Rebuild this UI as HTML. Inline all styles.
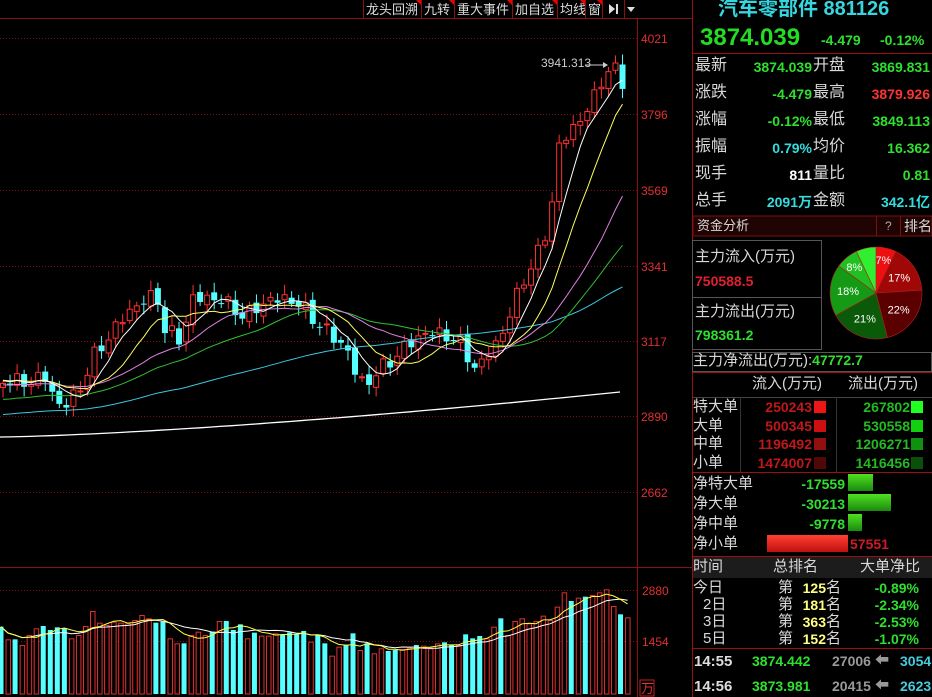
<!DOCTYPE html>
<html><head><meta charset="utf-8"><style>
html,body{margin:0;padding:0;background:#000;width:932px;height:697px;overflow:hidden}
body{position:relative;font-family:"Liberation Sans","Noto Sans CJK SC",sans-serif;color:#ccc}
.t{position:absolute;white-space:nowrap;line-height:1}
.r{text-align:right}
.g{color:#2ee02e}.rd{color:#ff3333}.c{color:#33dddd}.w{color:#fff}.y{color:#ffff80}.dr{color:#cc1a1a}
.lbl{color:#d8d8d8;font-size:15px}
.num{font-size:14px;font-weight:bold}
</style></head><body>
<svg id="ch" width="932" height="697" style="position:absolute;left:0;top:0"></svg>

<div class="t c" style="left:718px;top:-1px;font-size:20px;font-weight:bold;color:#35d6e0">汽车零部件 881126</div>
<div class="t g" style="left:700px;top:26px;font-size:24px;font-weight:bold;color:#22dd22">3874.039</div>
<div class="t g num" style="left:821px;top:33px">-4.479</div>
<div class="t g num" style="left:880px;top:33px">-0.12%</div>

<div id="rows"></div>

<div class="t lbl" style="left:697px;top:219px;font-size:13px">资金分析</div>
<div class="t" style="left:885px;top:220px;font-size:12px;color:#aaa">?</div>
<div class="t lbl" style="left:904px;top:219px;font-size:14px">排名</div>

<div class="t lbl" style="left:695px;top:249px">主力流入(万元)</div>
<div class="t num dr" style="left:695px;top:274px;color:#e02030">750588.5</div>
<div class="t lbl" style="left:695px;top:304px">主力流出(万元)</div>
<div class="t num g" style="left:695px;top:328px">798361.2</div>
<div class="t lbl" style="left:693px;top:353px">主力净流出(万元):<span class="num g">47772.7</span></div>

<div class="t lbl" style="left:752px;top:376px">流入(万元)</div>
<div class="t lbl" style="left:848px;top:376px">流出(万元)</div>
<div id="tbl"></div>

<div class="t lbl" style="left:693px;top:559px">时间</div>
<div class="t lbl" style="left:773px;top:559px">总排名</div>
<div class="t lbl" style="left:860px;top:559px">大单净比</div>
<div id="rank"></div>

<div class="t num" style="left:694px;top:654px;color:#ddd;font-size:15px">14:55</div>
<div class="t num g" style="left:752px;top:654px">3874.442</div>
<div class="t num" style="left:832px;top:654px;color:#999">27006</div>
<div class="t num" style="left:875px;top:653px;color:#999">&#x2B05;</div>
<div class="t num c" style="left:900px;top:654px;color:#44ccdd">3054</div>
<div class="t num" style="left:694px;top:679px;color:#ddd;font-size:15px">14:56</div>
<div class="t num g" style="left:752px;top:679px">3873.981</div>
<div class="t num" style="left:832px;top:679px;color:#999">20415</div>
<div class="t num" style="left:875px;top:678px;color:#999">&#x2B05;</div>
<div class="t num c" style="left:900px;top:679px;color:#44ccdd">2623</div>

<script>
(function(){
var S=document.getElementById('ch'),h='';
function L(x1,y1,x2,y2,c,w,d){h+='<line x1="'+x1+'" y1="'+y1+'" x2="'+x2+'" y2="'+y2+'" stroke="'+c+'" stroke-width="'+(w||1)+'"'+(d?' stroke-dasharray="'+d+'"':'')+'/>';}
function R(x,y,w,hh,f,s){h+='<rect x="'+x+'" y="'+y+'" width="'+w+'" height="'+hh+'" fill="'+f+'"'+(s?' stroke="'+s+'" stroke-width="1"':'')+'/>';}
function T(x,y,t,c,fs,a,fw){h+='<text x="'+x+'" y="'+y+'" fill="'+c+'" font-size="'+fs+'" font-family="Liberation Sans,Noto Sans CJK SC,sans-serif"'+(a?' text-anchor="'+a+'"':'')+(fw?' font-weight="bold"':'')+'>'+t+'</text>';}
var RED='#8b1010';
[38,114,190,266,341,416,492].forEach(function(y,i){L(0,y+.5,637,y+.5,'#7a1010',1,'1,2');T(641,y+5,['4021','3796','3569','3341','3117','2890','2662'][i],'#e03030',12);});
[590,641].forEach(function(y,i){L(0,y+.5,637,y+.5,'#7a1010',1,'1,2');T(642,y+5,['2880','1454'][i],'#e03030',12);});
L(0,567.5,692,567.5,RED,1);
L(637.5,18,637.5,697,RED,1);
L(0,18.5,692,18.5,RED,1);
L(692.5,0,692.5,697,'#9a1010',1);
var tb=[['龙头回溯',363,58],['九转',421,33],['重大事件',454,58],['加自选',512,45],['均线',557,28],['窗',585,17]];
tb.forEach(function(b){L(b[1]+.5,0,b[1]+.5,18,RED);T(b[1]+3,14,b[0],'#ddd',13);h+='<polygon points="'+(b[1]+b[2]-5)+',0 '+(b[1]+b[2])+',0 '+(b[1]+b[2])+',5" fill="#e00"/>';});
L(602.5,0,602.5,18,RED);L(624.5,0,624.5,18,RED);
h+='<polygon points="609,4 615,9 609,14" fill="#ddd"/>';L(617,4,617,14,'#ddd',2);
h+='<polygon points="627,7 635,7 631,12" fill="#ddd"/>';
var kp=[[0,380],[20,383],[45,378],[62,410],[70,400],[80,388],[95,355],[110,335],[130,310],[150,297],[158,300],[165,330],[180,340],[192,300],[210,297],[230,305],[245,318],[262,303],[285,298],[300,305],[315,320],[330,335],[345,345],[355,372],[365,385],[380,370],[400,352],[420,335],[440,333],[460,343],[478,372],[490,350],[505,330],[520,285],[535,262],[550,220],[558,150],[570,130],[585,115],[595,95],[605,72],[615,70],[622,82]];
function interp(x){for(var k=1;k<kp.length;k++){if(x<=kp[k][0]){var a=kp[k-1],b=kp[k];return a[1]+(b[1]-a[1])*(x-a[0])/(b[0]-a[0]);}}return kp[kp.length-1][1];}
var N=89,cl=[],i,x;
for(i=0;i<N;i++){x=i*7.04+3;cl.push(interp(x)+Math.sin(i*2.3)*6+Math.cos(i*1.7)*3);}
for(i=0;i<N;i++){x=i*7.04+3;var op=i?cl[i-1]+Math.sin(i*3.1)*3:cl[0]+4,c=cl[i];var bt=Math.min(op,c),bb=Math.max(op,c);if(bb-bt<1)bb=bt+1;
 var hi=bt-3-Math.abs(Math.sin(i*5.3))*7,lo=bb+3+Math.abs(Math.cos(i*4.1))*7;
 if(c<op){L(x,hi,x,bt,'#ff3030');L(x,bb,x,lo,'#ff3030');R(x-2.5,bt,5,bb-bt,'#000','#ff3030');}
 else{L(x,hi,x,lo,'#55ffff');R(x-3,bt,6,bb-bt,'#55ffff');}
}
function ma(n,col,base){var p='';for(var i=0;i<N;i++){var s=0;for(var j=i-n+1;j<=i;j++){s+=(j<0?base:cl[j]);}var v=s/n;p+=(i?'L':'M')+(i*7.04+3).toFixed(1)+','+v.toFixed(1);}h+='<path d="'+p+'" fill="none" stroke="'+col+'" stroke-width="1"/>';}
ma(60,'#3cc8e0',415);ma(30,'#30c030',400);ma(20,'#e080e0',385);ma(10,'#ffff60',380);ma(5,'#ffffff',380);
var p='';for(x=0;x<=620;x+=10){p+=(x?'L':'M')+x+','+(437-45*Math.pow(x/620,1.4)).toFixed(1);}h+='<path d="'+p+'" fill="none" stroke="#fff" stroke-width="1.3"/>';
T(541,67,'3941.313','#ccc',12);L(585,65,603,65,'#ccc');h+='<polygon points="603,62 608,65 603,68" fill="#ccc"/>';
var vd='c215 r253 c253 r270 r240 r220 c213 c225 c217 c220 r250 r240 r213 r168 r203 r210 r200 r203 r205 r195 r180 r190 c203 c200 r250 r265 c265 r240 r230 r240 c230 r198 c198 c225 c208 r250 c233 r242 r242 r235 c240 c232 c238 c228 r260 c240 c265 r302 r275 c270 c235 r285 c265 r295 r280 c288 c285 r282 r278 c270 r272 r280 r265 c262 c270 r270 c238 c250 c243 r250 r215 c190 r240 r198 r190 r205 r198 r182 r195 r155 r112 c138 r128 c125 r120 r112 r103 r153 c178 r187'.split(' ');
var vt=[];vd.forEach(function(s,i){var x=i*7.04+1,y=555+(+s.slice(1))/3;vt.push(y);if(s[0]=='c')R(x-2.5,y,5,694-y,'#55ffff');else R(x-2,y+.5,4.5,693.5-y,'#000','#e03030');});
function vma(n,col){var p='';for(var i=0;i<vt.length;i++){var s=0,k=0;for(var j=Math.max(0,i-n+1);j<=i;j++){s+=vt[j];k++;}p+=(i?'L':'M')+(i*7.04+1).toFixed(1)+','+(s/k).toFixed(1);}h+='<path d="'+p+'" fill="none" stroke="'+col+'"/>';}
vma(10,'#fff');vma(5,'#ffff40');
R(640,680,14,16,'#000','#c02020');T(641,693,'万','#e03030',13);
L(692,53.5,932,53.5,'#9a1010');
R(693,216,239,20,'#200404','#7a1010');L(876.5,216,876.5,236,'#7a1010');L(900.5,216,900.5,236,'#7a1010');
R(692.5,240.5,129,109,'none','#555');L(692,297.5,822,297.5,'#555');
R(692.5,352.5,239,19,'none','#555');
L(692,372.5,932,372.5,'#9a1010');L(692,397.5,932,397.5,'#444');
L(740.5,397,740.5,472,'#333');L(836.5,397,836.5,472,'#333');
L(692,472.5,932,472.5,'#9a1010');L(692,556.5,932,556.5,'#9a1010');
R(693,557,239,21,'#1c1c1c');
L(692,648.5,932,648.5,'#9a1010');
var cx=876,cy=293,rr=46,sl=[[7,'#ee1010','7%'],[17,'#a00808','17%'],[22,'#5a0000','22%'],[21,'#0a5a0a','21%'],[18,'#159a15','18%'],[8,'#20c020','8%'],[7,'#30ee30','']],a0=-90;
sl.forEach(function(s){var a1=a0+s[0]*3.6,r0=a0*Math.PI/180,r1=a1*Math.PI/180;h+='<path d="M'+cx+','+cy+'L'+(cx+rr*Math.cos(r0)).toFixed(1)+','+(cy+rr*Math.sin(r0)).toFixed(1)+'A'+rr+','+rr+' 0 '+(a1-a0>180?1:0)+' 1 '+(cx+rr*Math.cos(r1)).toFixed(1)+','+(cy+rr*Math.sin(r1)).toFixed(1)+'Z" fill="'+s[1]+'" stroke="#b02020" stroke-width=".6"/>';
 if(s[2]){var m=(a0+a1)/2*Math.PI/180,d=s[0]<10?34:28;T(cx+d*Math.cos(m),cy+d*Math.sin(m)+4,s[2],'#fff',11,'middle');}a0=a1;});
S.innerHTML=h;

var rows=[['最新','3874.039','g','开盘','3869.831','g'],['涨跌','-4.479','g','最高','3879.926','rd'],['涨幅','-0.12%','g','最低','3849.113','g'],['振幅','0.79%','c','均价','16.362','g'],['现手','811','w','量比','0.81','g'],['总手','2091万','c','金额','342.1亿','c']],o='';
rows.forEach(function(r,i){var y=58+i*27;o+='<div class="t lbl" style="left:695px;top:'+y+'px;font-size:16px">'+r[0]+'</div><div class="t num r '+r[2]+'" style="right:'+(932-812)+'px;top:'+(y+2)+'px">'+r[1]+'</div><div class="t lbl" style="left:813px;top:'+y+'px;font-size:16px">'+r[3]+'</div><div class="t num r '+r[5]+'" style="right:2px;top:'+(y+2)+'px">'+r[4]+'</div>';});
document.getElementById('rows').innerHTML=o;
var tb2=[['特大单','250243','#ee1515','267802','#20ff20'],['大单','500345','#cc1010','530558','#10d010'],['中单','1196492','#901010','1206271','#109010'],['小单','1474007','#500808','1416456','#0a500a']];o='';
tb2.forEach(function(r,i){var y=399+i*18.5;o+='<div class="t lbl" style="left:693px;top:'+y+'px">'+r[0]+'</div><div class="t num r" style="right:'+(932-812)+'px;top:'+(y+1)+'px;color:#c01818">'+r[1]+'</div><div style="position:absolute;left:814px;top:'+(y+2)+'px;width:12px;height:12px;background:'+r[2]+'"></div><div class="t num r" style="right:'+(932-910)+'px;top:'+(y+1)+'px;color:#22bb22">'+r[3]+'</div><div style="position:absolute;left:911px;top:'+(y+2)+'px;width:12px;height:12px;background:'+r[4]+'"></div>';});
var nt=[['净特大单','-17559',25],['净大单','-30213',43],['净中单','-9778',14],['净小单','',0]];
nt.forEach(function(r,i){var y=476+i*20;o+='<div class="t lbl" style="left:693px;top:'+y+'px">'+r[0]+'</div>';if(r[1])o+='<div class="t num r g" style="right:'+(932-845)+'px;top:'+(y+1)+'px">'+r[1]+'</div><div style="position:absolute;left:848px;top:'+(y-2)+'px;width:'+r[2]+'px;height:17px;background:linear-gradient(#50e020,#1a8a10)"></div>';});
o+='<div style="position:absolute;left:767px;top:535px;width:81px;height:17px;background:linear-gradient(#ff4030,#c01010)"></div><div class="t num" style="left:850px;top:537px;color:#d01828">57551</div>';
document.getElementById('tbl').innerHTML=o;
var rk=[['今日','125','-0.89%'],['2日','181','-2.34%'],['3日','363','-2.53%'],['5日','152','-1.07%']];o='';
rk.forEach(function(r,i){var y=580+i*17;o+='<div class="t lbl" style="left:'+(i?703:693)+'px;top:'+y+'px">'+r[0]+'</div><div class="t lbl" style="left:778px;top:'+y+'px">第</div><div class="t num y r" style="right:'+(932-826)+'px;top:'+(y+1)+'px">'+r[1]+'</div><div class="t lbl" style="left:826px;top:'+y+'px">名</div><div class="t num g r" style="right:13px;top:'+(y+1)+'px">'+r[2]+'</div>';});
document.getElementById('rank').innerHTML=o;
})();
</script>
</body></html>
